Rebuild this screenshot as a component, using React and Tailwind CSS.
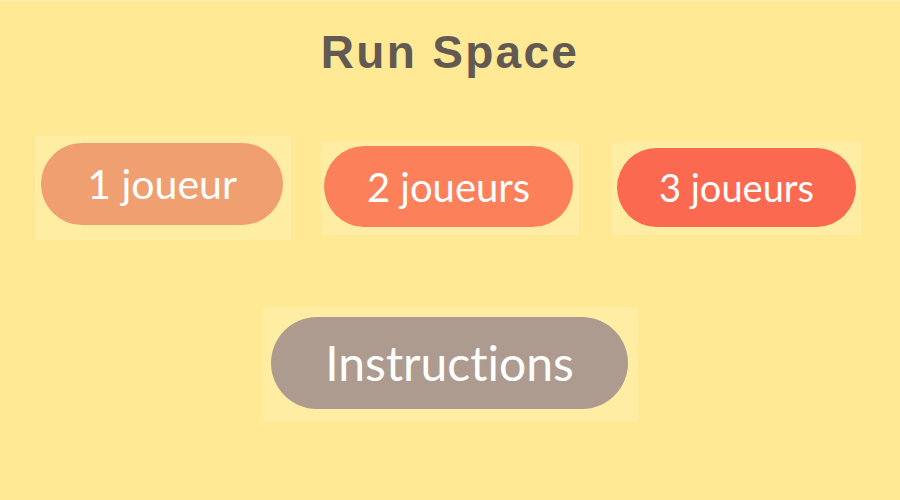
export default function App() {
  const btnFont = { fontFamily: '"Lato", "Open Sans", sans-serif', fontVariantLigatures: 'none' };
  return (
    <div className="w-[900px] h-[500px] bg-[#ffe994] flex flex-col overflow-hidden border-t border-[#fff0b0]">
      <h1
        className="text-center text-[46px] font-bold leading-none text-[#625a52] mt-[28px] tracking-[2.3px]"
        style={{ fontFamily: '"Liberation Sans", Arial, sans-serif' }}
      >
        Run Space
      </h1>
      <div className="flex items-start mt-[61px]" style={btnFont}>
        <div className="ml-[35px] w-[256px] h-[104px] bg-[#ffeda3] pt-[7px] pl-[6px]">
          <div className="w-[242px] h-[82px] rounded-full bg-[#f0a070] flex items-center justify-center text-white text-[41px]">
            1 joueur
          </div>
        </div>
        <div className="ml-[30px] mt-[6px] w-[258px] h-[93px] bg-[#ffeda3] pt-[4px] pl-[3px]">
          <div className="w-[249px] h-[81px] rounded-full bg-[#fc805a] flex items-center justify-center text-white text-[40px]">
            2 joueurs
          </div>
        </div>
        <div className="ml-[33px] mt-[6px] w-[249px] h-[93px] bg-[#ffeda3] pt-[6px] pl-[5px]">
          <div className="w-[239px] h-[79px] rounded-full bg-[#fb6a50] flex items-center justify-center text-white text-[38px]">
            3 joueurs
          </div>
        </div>
      </div>
      <div className="flex mt-[67px]" style={btnFont}>
        <div className="ml-[263px] w-[375px] h-[115px] bg-[#ffeda3] pt-[10px] pl-[8px]">
          <div className="w-[357px] h-[92px] rounded-full bg-[#ae9b8f] flex items-center justify-center text-white text-[48px]">
            Instructions
          </div>
        </div>
      </div>
    </div>
  );
}
